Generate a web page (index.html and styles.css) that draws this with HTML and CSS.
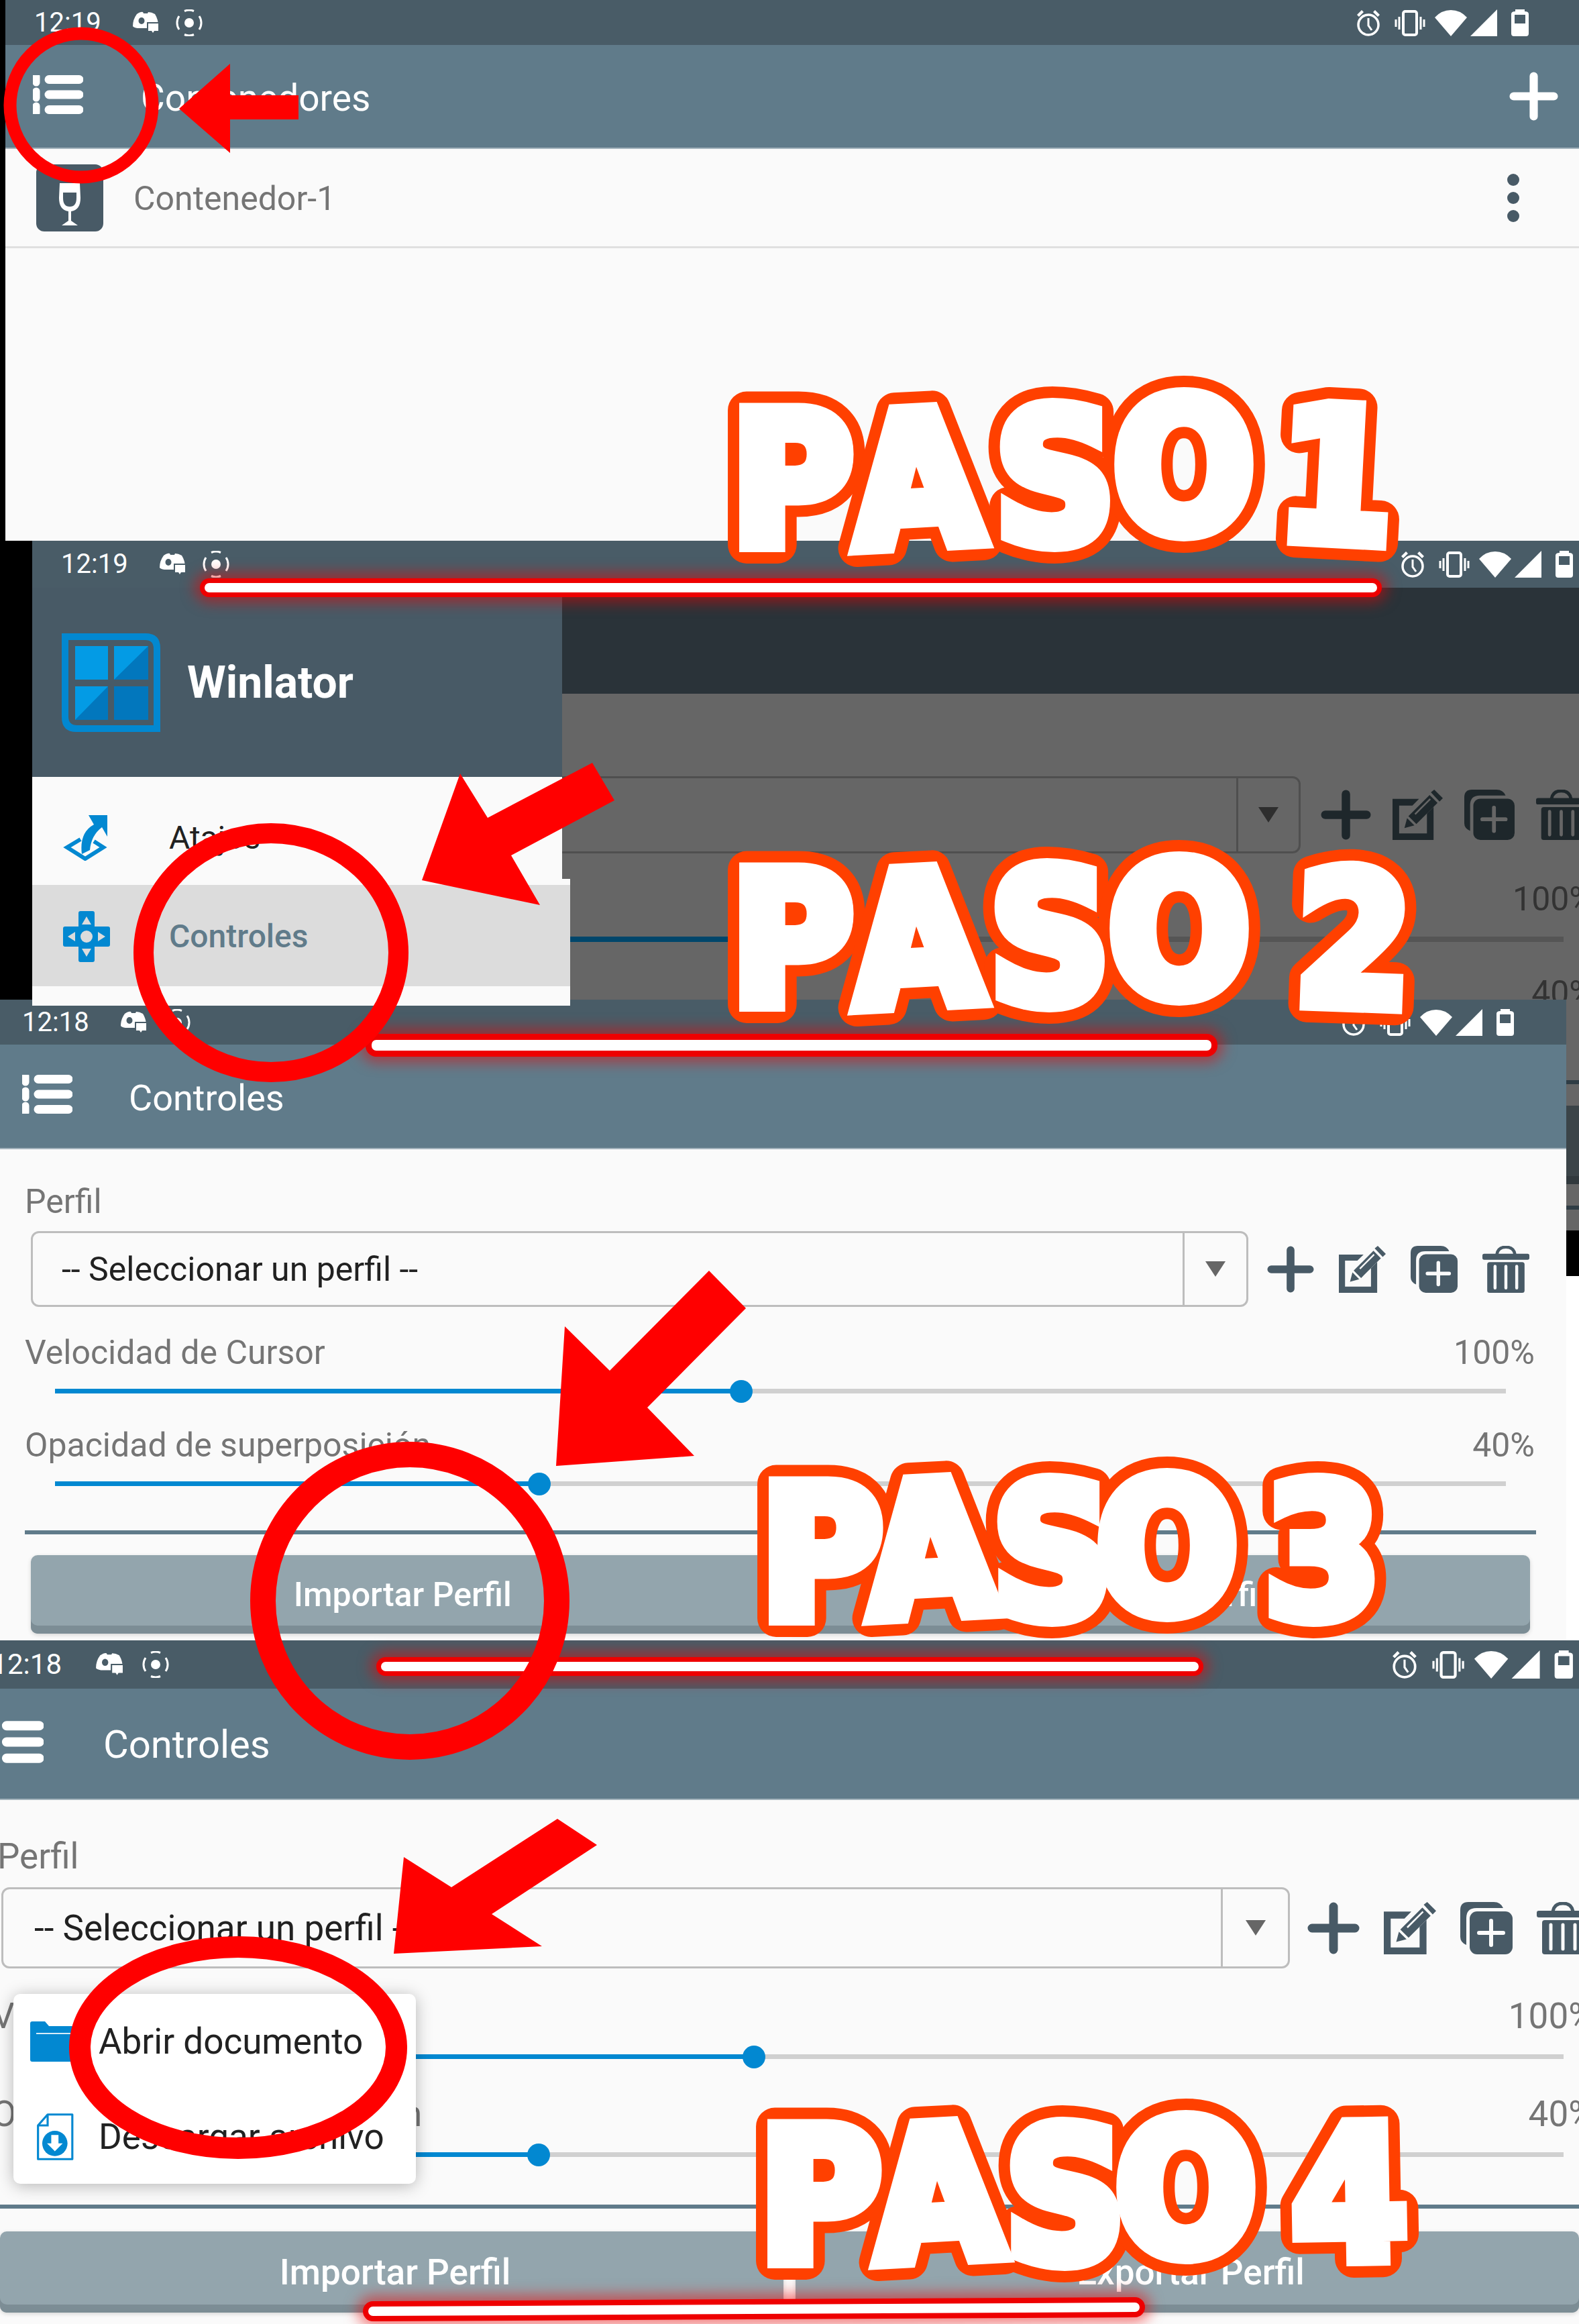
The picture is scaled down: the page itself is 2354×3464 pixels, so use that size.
FILE: index.html
```html
<!DOCTYPE html>
<html>
<head>
    <title>Winlator - Pasos</title>
    <meta name="viewport" content="width=device-width, initial-scale=1">
    <link rel="stylesheet" href="styles.css">
</head>
<body>
    <svg class="sprite" aria-hidden="true">
        <symbol id="i-discord" viewBox="0 0 40 36">
            <path d="M7 5Q13 1 16 2L17 4H23L24 2Q29 2 34 5Q39 13 39 23L31 26H8Q2 25 1 23Q1 13 7 5Z" fill="#fff"/>
            <ellipse cx="14" cy="15" rx="4.5" ry="5" fill="#495c67"/>
            <path d="M22 17H41V32H34L31 36L29 32H22Z" fill="#495c67"/>
            <path d="M24 19H39V30H33L31 33L29 30H24Z" fill="#fff"/>
        </symbol>
        <symbol id="i-target" viewBox="0 0 40 40">
            <circle cx="20" cy="20" r="7" fill="#fff"/>
            <path d="M5 30A18 18 0 0 1 5 10M35 10A18 18 0 0 1 35 30M13 2.500A18 18 0 0 1 27 2.500M13 37.500A18 18 0 0 0 27 37.500" fill="none" stroke="#fff" stroke-width="3"/>
        </symbol>
        <symbol id="i-system" viewBox="0 0 257 40">
            <circle cx="18" cy="23" r="15" fill="none" stroke="#fff" stroke-width="3.500"/>
            <path d="M18 13V24L23 31" fill="none" stroke="#fff" stroke-width="3"/>
            <path d="M1 8L8 1L11 4L4 11ZM35 8L28 1L25 4L32 11Z" fill="#fff"/>
            <rect x="70" y="3" width="20" height="35" rx="3" fill="none" stroke="#fff" stroke-width="4"/>
            <path d="M64 11V30M59 15V26M96 11V30M101 15V26" stroke="#fff" stroke-width="3"/>
            <path d="M117 12Q127 1 141 1Q155 1 165 12L141 40Z" fill="#fff"/>
            <path d="M170 40L210 0V40Z" fill="#fff"/>
            <path d="M237 3V0H251V3Q257 3 257 7V36Q257 40 253 40H235Q231 40 231 36V7Q231 3 237 3ZM236 8V21H252V8Z" fill="#fff" fill-rule="evenodd"/>
        </symbol>
        <symbol id="i-list" viewBox="0 0 75 58">
            <path d="M24 6.500H69M24 29H69M24 51.500H69" stroke="#fff" stroke-width="13" stroke-linecap="round"/>
            <path d="M5 2V11M5 24V34M5 46V56" stroke="#fff" stroke-width="11" stroke-linecap="round"/>
        </symbol>
        <symbol id="i-plus" viewBox="0 0 78 78">
            <path d="M39 7V71M7 39H71" fill="none" stroke="currentColor" stroke-width="13" stroke-linecap="round"/>
        </symbol>
        <symbol id="i-edit" viewBox="0 0 76 76">
            <path d="M0 14H40L30 24H10V66H52V36L62 26V76H0Z" fill="currentColor"/>
            <path d="M18 58L22 43L33 54Z" fill="currentColor"/>
            <path d="M24 40L56 8L68 20L36 52Z" fill="currentColor"/>
            <path d="M34 37L57 14" stroke="var(--cut)" stroke-width="2.500"/>
            <path d="M58 4L63 0L76 13L71 18Z" fill="currentColor"/>
        </symbol>
        <symbol id="i-copy" viewBox="0 0 78 78">
            <path d="M0 12Q0 0 12 0H50Q60 0 64 9H24Q9 9 9 24V64Q0 60 0 52Z" fill="currentColor"/>
            <rect x="14" y="14" width="64" height="64" rx="11" fill="currentColor"/>
            <path d="M46 28V64M28 46H64" stroke="var(--cut)" stroke-width="6" stroke-linecap="round"/>
        </symbol>
        <symbol id="i-trash" viewBox="0 0 78 78">
            <path d="M24 14Q26 2 39 2Q52 2 54 14" fill="none" stroke="currentColor" stroke-width="5"/>
            <rect x="0" y="13" width="78" height="10" rx="3" fill="currentColor"/>
            <rect x="8" y="27" width="62" height="51" rx="4" fill="currentColor"/>
            <path d="M21 34V70M39 34V70M57 34V70" stroke="var(--cut)" stroke-width="5" stroke-linecap="round"/>
        </symbol>
    </svg>

    <div class="page">

        <section class="shot shot-a">
            <div class="edge-strip"></div>
            <div class="screen">
                <div class="status">
                    <span class="clock">12:19</span>
                    <svg class="ico-discord"><use href="#i-discord"/></svg>
                    <svg class="ico-target"><use href="#i-target"/></svg>
                    <svg class="ico-system"><use href="#i-system"/></svg>
                </div>
                <header class="appbar">
                    <svg class="ico-list"><use href="#i-list"/></svg>
                    <span class="appbar-title">Contenedores</span>
                    <svg class="ico-add"><use href="#i-plus"/></svg>
                </header>
                <div class="container-row">
                    <svg class="wine" viewBox="0 0 100 100">
                        <rect width="100" height="100" rx="12" fill="#485a66"/>
                        <path d="M35 28H65L66 50Q66 68 52 70V84L62 91H38L48 84V70Q34 68 34 50Z" fill="#fff"/>
                        <path d="M40 42H60V50Q60 63 50 63Q40 63 40 50Z" fill="#485a66"/>
                    </svg>
                    <span class="container-name">Contenedor-1</span>
                    <svg class="kebab" viewBox="0 0 18 72">
                        <circle cx="9" cy="9" r="9"/>
                        <circle cx="9" cy="36" r="9"/>
                        <circle cx="9" cy="63" r="9"/>
                    </svg>
                </div>
            </div>
        </section>

        <section class="shot shot-b">
            <div class="edge-strip"></div>
            <div class="screen">
                <div class="status">
                    <span class="clock">12:19</span>
                    <svg class="ico-discord"><use href="#i-discord"/></svg>
                    <svg class="ico-target"><use href="#i-target"/></svg>
                    <svg class="ico-system"><use href="#i-system"/></svg>
                </div>
                <div class="dark-bar"></div>
                <div class="dimmed">
                    <div class="select-row">
                        <div class="select">
                            <span class="select-text"></span>
                            <span class="select-caret"><i></i></span>
                        </div>
                        <svg class="tool"><use href="#i-plus"/></svg>
                        <svg class="tool"><use href="#i-edit"/></svg>
                        <svg class="tool"><use href="#i-copy"/></svg>
                        <svg class="tool"><use href="#i-trash"/></svg>
                    </div>
                    <div class="value-row"><span></span><span>100%</span></div>
                    <div class="slider"><div class="slider-fill" style="width:47%"></div></div>
                    <div class="value-row"><span></span><span>40%</span></div>
                </div>

                <nav class="drawer">
                    <div class="drawer-head">
                        <svg class="logo" viewBox="0 0 147 147">
                            <path d="M0 0H125Q147 0 147 22V147H22Q0 147 0 125Z" fill="#0288d1"/>
                            <path d="M10 10H124Q137 10 137 23V137H23Q10 137 10 124Z" fill="#485a66"/>
                            <path d="M20 19H69V69H20ZM78 19H129V69H78ZM20 79H69V129H20Z" fill="#039be5"/>
                            <path d="M78 79H129V129H78ZM78 69L129 19V69ZM20 129L69 79V129Z" fill="#0277bd"/>
                        </svg>
                        <span class="drawer-title">Winlator</span>
                    </div>
                    <div class="drawer-item">
                        <svg class="drawer-ico" viewBox="0 0 70 70">
                            <path d="M26 38L6 50L33 67L60 50L46 41" fill="none" stroke="#0288d1" stroke-width="6"/>
                            <path d="M28 60Q24 28 46 16L38 2H66V34L58 20Q42 32 40 54Z" fill="#0288d1"/>
                        </svg>
                        <span class="drawer-label">Atajos</span>
                    </div>
                    <div class="drawer-lower">
                        <div class="drawer-item is-active">
                            <svg class="drawer-ico" viewBox="0 0 70 76">
                                <path d="M23 3Q23 0 26 0H44Q47 0 47 3V23H67Q70 23 70 26V50Q70 53 67 53H47V73Q47 76 44 76H26Q23 76 23 73V53H3Q0 53 0 50V26Q0 23 3 23H23Z" fill="#0288d1"/>
                                <circle cx="35" cy="38" r="9" fill="#dcdcdc"/>
                                <path d="M35 8L42 20H28ZM35 68L42 56H28ZM7 38L18 31V45ZM63 38L52 31V45Z" fill="#dcdcdc"/>
                            </svg>
                            <span class="drawer-label">Controles</span>
                        </div>
                    </div>
                </nav>
            </div>
        </section>

        <section class="shot shot-c">
            <div class="screen">
                <div class="status">
                    <span class="clock">12:18</span>
                    <svg class="ico-discord"><use href="#i-discord"/></svg>
                    <svg class="ico-target"><use href="#i-target"/></svg>
                    <svg class="ico-system"><use href="#i-system"/></svg>
                </div>
                <header class="appbar">
                    <svg class="ico-list"><use href="#i-list"/></svg>
                    <span class="appbar-title">Controles</span>
                </header>
                <div class="profile">
                    <div class="field-label">Perfil</div>
                    <div class="select-row">
                        <div class="select">
                            <span class="select-text">-- Seleccionar un perfil --</span>
                            <span class="select-caret"><i></i></span>
                        </div>
                        <svg class="tool"><use href="#i-plus"/></svg>
                        <svg class="tool"><use href="#i-edit"/></svg>
                        <svg class="tool"><use href="#i-copy"/></svg>
                        <svg class="tool"><use href="#i-trash"/></svg>
                    </div>
                    <div class="value-row"><span>Velocidad de Cursor</span><span>100%</span></div>
                    <div class="slider"><div class="slider-fill" style="width:47.3%"></div></div>
                    <div class="value-row"><span>Opacidad de superposición</span><span>40%</span></div>
                    <div class="slider"><div class="slider-fill" style="width:33.4%"></div></div>
                    <div class="rule"></div>
                    <div class="button-row">
                        <div class="button">Importar Perfil</div>
                        <div class="button">Exportar Perfil</div>
                    </div>
                </div>
            </div>
            <div class="side-strip">
                <div class="dim-a"></div>
                <div class="dim-line"></div>
                <div class="dim-b"></div>
                <div class="dim-button"></div>
                <div class="dim-button-edge"></div>
                <div class="dim-b"></div>
                <div class="dim-line"></div>
                <div class="dim-c"></div>
                <div class="dim-black"></div>
            </div>
        </section>

        <section class="shot shot-d">
            <div class="screen">
                <div class="status">
                    <span class="clock">12:18</span>
                    <svg class="ico-discord"><use href="#i-discord"/></svg>
                    <svg class="ico-target"><use href="#i-target"/></svg>
                    <svg class="ico-system"><use href="#i-system"/></svg>
                </div>
                <header class="appbar">
                    <svg class="ico-list"><use href="#i-list"/></svg>
                    <span class="appbar-title">Controles</span>
                </header>
                <div class="profile">
                    <div class="field-label">Perfil</div>
                    <div class="select-row">
                        <div class="select">
                            <span class="select-text">-- Seleccionar un perfil --</span>
                            <span class="select-caret"><i></i></span>
                        </div>
                        <svg class="tool"><use href="#i-plus"/></svg>
                        <svg class="tool"><use href="#i-edit"/></svg>
                        <svg class="tool"><use href="#i-copy"/></svg>
                        <svg class="tool"><use href="#i-trash"/></svg>
                    </div>
                    <div class="value-row"><span>Velocidad de Cursor</span><span>100%</span></div>
                    <div class="slider"><div class="slider-fill" style="width:47.3%"></div></div>
                    <div class="value-row"><span>Opacidad de superposición</span><span>40%</span></div>
                    <div class="slider"><div class="slider-fill" style="width:33.3%"></div></div>
                    <div class="rule"></div>
                    <div class="button-row">
                        <div class="button">Importar Perfil</div>
                        <div class="button">Exportar Perfil</div>
                    </div>
                </div>
                <div class="file-menu">
                    <div class="file-item">
                        <svg class="file-ico" viewBox="0 0 70 60">
                            <path d="M0 3Q0 0 3 0H22L28 7H66Q70 7 70 11V60H3Q0 60 0 57Z" fill="#0288d1"/>
                            <path d="M9 18H70" stroke="#d6ecf8" stroke-width="2"/>
                        </svg>
                        <span>Abrir documento</span>
                    </div>
                    <div class="file-item">
                        <svg class="file-ico" viewBox="0 0 70 78">
                            <path d="M25 2H66V76H9V20Z" fill="#fff" stroke="#0288d1" stroke-width="3.500" stroke-linejoin="round"/>
                            <path d="M25 2V20H9" fill="none" stroke="#0288d1" stroke-width="3.500"/>
                            <circle cx="37" cy="50" r="21" fill="#0288d1"/>
                            <path d="M31 36H43V50H50L37 63L24 50H31Z" fill="#fff"/>
                        </svg>
                        <span>Descargar archivo</span>
                    </div>
                </div>
            </div>
        </section>

        <div class="glow-bar bar-1"></div>
        <div class="glow-bar bar-2"></div>
        <div class="glow-bar bar-3"></div>
        <div class="glow-bar bar-4"></div>

        <!-- hand drawn marks on top of the screenshots -->
        <svg class="marks" viewBox="0 0 2354 3464">
            <defs>
                <g id="paso-1">
                    <text x="1181" y="812">P</text>
                    <text x="1372" y="812" transform="rotate(-3 1372 812)">A</text>
                    <text x="1573" y="808">S</text>
                    <text x="1765" y="792">O</text>
                    <text x="1987" y="806" transform="rotate(3 1987 806)">1</text>
                </g>
                <g id="paso-2">
                    <text x="1181" y="1497">P</text>
                    <text x="1372" y="1497" transform="rotate(-3 1372 1497)">A</text>
                    <text x="1565" y="1494">S</text>
                    <text x="1758" y="1484">O</text>
                    <text x="2015" y="1498" transform="rotate(2 2015 1498)">2</text>
                </g>
                <g id="paso-3">
                    <text x="1225" y="2412">P</text>
                    <text x="1393" y="2407" transform="rotate(-3 1393 2407)">A</text>
                    <text x="1569" y="2410">S</text>
                    <text x="1740" y="2403">O</text>
                    <text x="1972" y="2410">3</text>
                </g>
                <g id="paso-4">
                    <text x="1223" y="3370">P</text>
                    <text x="1403" y="3367" transform="rotate(-3 1403 3367)">A</text>
                    <text x="1588" y="3370">S</text>
                    <text x="1768" y="3360">O</text>
                    <text x="2013" y="3367" transform="rotate(-1 2013 3367)">4</text>
                </g>
            </defs>

            <ellipse class="ring" cx="121" cy="157" rx="106" ry="107" stroke-width="19"/>
            <polygon class="arrow" points="267,162 343,95 343,142 445,142 445,178 343,178 343,228"/>

            <ellipse class="ring" cx="404" cy="1420" rx="190" ry="178" stroke-width="30"/>
            <polygon class="arrow" points="629,1312 686,1153 727,1219 883,1137 916,1193 762,1275 805,1349"/>

            <ellipse class="ring" cx="611" cy="2386" rx="219" ry="218" stroke-width="38"/>
            <polygon class="arrow" points="829,2185 842,1977 909,2043 1057,1894 1112,1950 965,2098 1035,2170"/>

            <ellipse class="ring" cx="355" cy="3052" rx="236" ry="150" stroke-width="32"/>
            <polygon class="arrow" points="587,2912 602,2768 673,2813 831,2711 890,2750 733,2853 808,2901"/>

            <use class="title-edge" href="#paso-1"/>
            <use class="title-face" href="#paso-1"/>
            <use class="title-edge" href="#paso-2"/>
            <use class="title-face" href="#paso-2"/>
            <use class="title-edge" href="#paso-3"/>
            <use class="title-face" href="#paso-3"/>
            <use class="title-edge" href="#paso-4"/>
            <use class="title-face" href="#paso-4"/>
        </svg>
    </div>
</body>
</html>
```

FILE: styles.css
```css
* {
    box-sizing: border-box;
}

body {
    margin: 0;
    background-color: #fff;
    font-family: Roboto, "Liberation Sans", sans-serif;
}

.sprite {
    position: absolute;
    width: 0;
    height: 0;
}

.page {
    position: relative;
    width: 2354px;
    height: 3464px;
    overflow: hidden;
}

.shot {
    display: flex;
    align-items: stretch;
}

.edge-strip {
    background-color: #000;
}

.screen {
    position: relative;
    flex: 1;
    min-width: 0;
    display: flex;
    flex-direction: column;
    background-color: #fafafa;
    --cut: #fafafa;
}

/* status bar */
.status {
    display: flex;
    align-items: center;
    flex: none;
    background-color: #495c67;
    color: #fff;
}

.clock {
    width: 99px;
    font-size: 40px;
    line-height: 40px;
}

.ico-discord {
    width: 40px;
    height: 36px;
    margin-left: 47px;
}

.ico-target {
    width: 40px;
    height: 40px;
    margin-left: 25px;
}

.ico-system {
    width: 257px;
    height: 40px;
    margin-left: auto;
}

/* app bar */
.appbar {
    display: flex;
    align-items: center;
    flex: none;
    background-color: #607b8a;
    border-bottom: 2px solid #a3b3bc;
    color: #fff;
}

.ico-list {
    width: 75px;
    height: 58px;
    flex: none;
}

.appbar-title {
    font-size: 56px;
}

.ico-add {
    width: 73px;
    height: 73px;
    margin-left: auto;
    margin-right: 31px;
    color: #fff;
}

/* step 1 */
.shot-a {
    height: 806px;
}

.shot-a .edge-strip {
    width: 8px;
}

.shot-a .status {
    height: 67px;
    padding: 0 75px 0 43px;
}

.shot-a .appbar {
    height: 155px;
    padding-left: 41px;
}

.shot-a .ico-list {
    margin-top: -6px;
}

.shot-a .appbar-title {
    margin: 4px 0 0 86px;
    font-size: 55px;
}

.container-row {
    display: flex;
    align-items: center;
    height: 148px;
    padding: 0 89px 0 46px;
    border-bottom: 3px solid #e0e0e0;
}

.wine {
    width: 100px;
    height: 100px;
}

.container-name {
    margin: 3px 0 0 45px;
    font-size: 50px;
    color: #757575;
}

.kebab {
    width: 18px;
    height: 72px;
    margin-left: auto;
    fill: #485a66;
}

/* step 2 */
.shot-b {
    position: relative;
    z-index: 2;
    height: 684px;
}

.shot-b .edge-strip {
    width: 48px;
}

.shot-b .screen {
    background-color: #666;
    --cut: #666;
}

.shot-b .status {
    height: 70px;
    padding: 0 9px 0 43px;
}

.dark-bar {
    height: 158px;
    flex: none;
    background-color: #2a3339;
}

.dimmed {
    flex: 1;
    min-height: 0;
    overflow: hidden;
    padding-top: 123px;
    font-size: 50px;
    color: #333;
}

.dimmed .select {
    width: 1891px;
    height: 115px;
    border-color: #4f4f4f;
}

.dimmed .select-caret {
    width: 93px;
    border-color: #4f4f4f;
}

.dimmed .select-caret i {
    border-top-color: #2e2e2e;
}

.dimmed .select-row {
    gap: 32px;
}

.dimmed .select-row .tool:first-of-type {
    margin-left: -2px;
}

.dimmed .tool {
    width: 75px;
    height: 75px;
    color: #1e272b;
}

.dimmed .value-row {
    height: 60px;
    margin: 38px -22px 0 0;
    line-height: 60px;
    color: #333;
}

.dimmed .slider {
    height: 8px;
    margin: 26px 23px 0 0;
    background-color: #555;
}

.dimmed .slider + .value-row {
    margin-top: 46px;
}

.dimmed .slider-fill {
    background-color: #00466b;
}

.drawer {
    position: absolute;
    left: 0;
    top: 70px;
    width: 790px;
    height: 623px;
}

.drawer-head {
    display: flex;
    align-items: center;
    height: 282px;
    padding-left: 44px;
    background-color: #485a66;
}

.logo {
    width: 147px;
    height: 147px;
}

.drawer-title {
    margin-left: 40px;
    font-size: 66px;
    font-weight: 700;
    color: #fff;
}

.drawer-item {
    display: flex;
    align-items: center;
    height: 152px;
    padding: 28px 0 0 46px;
    background-color: #fafafa;
}

.drawer-ico {
    width: 70px;
    height: 70px;
    flex: none;
}

.drawer-label {
    margin-left: 88px;
    font-size: 48px;
    color: #212121;
}

.drawer-lower {
    width: 802px;
    height: 189px;
    padding-top: 9px;
    background-color: #fafafa;
}

.drawer-item.is-active {
    height: 151px;
    padding-top: 2px;
    background-color: #dcdcdc;
}

.is-active .drawer-ico {
    height: 76px;
}

.is-active .drawer-label {
    font-weight: 500;
    color: #607b8a;
}

/* profile form */
.field-label {
    height: 56px;
    font-size: 50px;
    line-height: 56px;
    color: #757575;
}

.select-row {
    display: flex;
    align-items: center;
    gap: 36px;
}

.select {
    display: flex;
    flex: none;
    justify-content: space-between;
    border: 3px solid #bdbdbd;
    border-radius: 12px;
}

.select-text {
    align-self: center;
    color: #212121;
}

.select-caret {
    display: flex;
    align-items: center;
    justify-content: center;
    border-left: 3px solid #bdbdbd;
}

.select-caret i {
    width: 0;
    height: 0;
    border-left: 15px solid transparent;
    border-right: 15px solid transparent;
    border-top: 23px solid #666;
}

.tool {
    flex: none;
    color: #485a66;
}

.value-row {
    display: flex;
    justify-content: space-between;
    color: #757575;
}

.slider {
    position: relative;
    height: 7px;
    background-color: #d0d0d0;
}

.slider-fill {
    position: relative;
    height: 100%;
    background-color: #0288d1;
}

.slider-fill::after {
    content: "";
    position: absolute;
    right: -17px;
    top: 50%;
    width: 34px;
    height: 34px;
    margin-top: -17px;
    border-radius: 50%;
    background-color: #0288d1;
}

.dimmed .slider-fill::after {
    display: none;
}

.rule {
    height: 6px;
    background-color: #607b8a;
}

.button-row {
    display: flex;
    gap: 18px;
}

.button {
    display: flex;
    flex: 1;
    align-items: center;
    justify-content: center;
    background-color: #93a5ad;
    border-radius: 10px;
    box-shadow: inset 0 -12px 0 #7c8d95, 0 2px 6px rgba(0, 0, 0, 0.15);
    font-weight: 500;
    color: #fff;
}

/* step 3 */
.shot-c {
    height: 955px;
}

.shot-c .screen {
    flex: none;
    width: 2335px;
}

.shot-c .status {
    height: 67px;
    padding: 0 78px 0 33px;
}

.shot-c .appbar {
    height: 156px;
    padding-left: 33px;
}

.shot-c .ico-list {
    margin-top: -6px;
}

.shot-c .appbar-title {
    margin: 4px 0 0 84px;
    font-size: 54px;
}

.shot-c .profile {
    padding: 50px 47px 0 37px;
    font-size: 50px;
}

.shot-c .select-row {
    margin: 16px 0 0 9px;
    gap: 37px;
}

.shot-c .select {
    width: 1815px;
    height: 113px;
    margin-right: -9px;
}

.shot-c .select-text {
    padding-left: 43px;
}

.shot-c .select-caret {
    width: 95px;
}

.shot-c .tool {
    width: 70px;
    height: 70px;
}

.shot-c .value-row {
    height: 56px;
    margin-top: 40px;
    line-height: 56px;
}

.shot-c .slider {
    margin: 26px 43px 0 45px;
}

.shot-c .slider + .value-row {
    margin-top: 49px;
}

.shot-c .rule {
    margin: 66px -2px 0 0;
}

.shot-c .button-row {
    height: 117px;
    margin: 31px 7px 0 9px;
}

.shot-c .button {
    font-size: 50px;
}

.side-strip {
    flex: 1;
    display: flex;
    flex-direction: column;
}

.dim-a {
    height: 120px;
    background-color: #666;
}

.dim-b {
    height: 32px;
    background-color: #666;
}

.dim-c {
    height: 31px;
    background-color: #666;
}

.dim-line {
    height: 6px;
    background-color: #2f3d45;
}

.dim-button {
    height: 105px;
    background-color: #3b4448;
}

.dim-button-edge {
    height: 12px;
    background-color: #31393d;
}

.dim-black {
    height: 68px;
    background-color: #000;
}

/* step 4 */
.shot-d {
    height: 1019px;
}

.shot-d .status {
    height: 72px;
    padding: 0 9px 0 0;
}

.shot-d .clock {
    width: 92px;
    overflow: hidden;
    direction: rtl;
    font-size: 42px;
}

.shot-d .ico-discord {
    width: 42px;
    height: 38px;
    margin-left: 50px;
}

.shot-d .ico-target {
    margin-left: 28px;
}

.shot-d .ico-system {
    width: 270px;
    height: 42px;
}

.shot-d .appbar {
    height: 166px;
    padding-left: 0;
}

.shot-d .ico-list {
    width: 81px;
    height: 63px;
    margin: -6px 0 0 -16px;
}

.shot-d .appbar-title {
    margin: 2px 0 0 89px;
    font-size: 58px;
}

.shot-d .profile {
    padding-top: 54px;
    font-size: 53px;
}

.shot-d .field-label {
    height: 60px;
    margin-left: -4px;
    font-size: 53px;
    line-height: 60px;
}

.shot-d .select-row {
    margin: 16px 0 0 2px;
    gap: 36px;
}

.shot-d .select {
    width: 1921px;
    height: 121px;
    margin-right: -10px;
}

.shot-d .select-text {
    padding-left: 46px;
}

.shot-d .select-caret {
    width: 100px;
}

.shot-d .tool {
    width: 78px;
    height: 78px;
}

.shot-d .value-row {
    height: 60px;
    margin: 41px -23px 0 -12px;
    line-height: 60px;
}

.shot-d .slider {
    margin: 27px 23px 0 40px;
}

.shot-d .slider + .value-row {
    margin-top: 52px;
}

.shot-d .rule {
    margin-top: 71px;
}

.shot-d .button-row {
    height: 121px;
    margin-top: 34px;
}

.shot-d .button {
    padding-left: 10px;
    font-size: 53px;
}

.file-menu {
    position: absolute;
    left: 20px;
    top: 527px;
    width: 600px;
    height: 283px;
    border-radius: 10px;
    background-color: #fff;
    box-shadow: 0 3px 24px rgba(0, 0, 0, 0.28);
}

.file-item {
    display: flex;
    align-items: center;
    height: 142px;
    padding-left: 25px;
    font-size: 53px;
    color: #212121;
}

.file-ico {
    width: 70px;
    height: 70px;
    margin-right: 32px;
    flex: none;
}

/* neon bars */
.glow-bar {
    position: absolute;
    z-index: 3;
    border: 7px solid #ee0000;
    border-radius: 16px;
    background-color: #fff;
    box-shadow: 0 0 20px 8px rgba(238, 0, 0, 0.5);
}

.bar-1 {
    left: 298px;
    top: 862px;
    width: 1762px;
    height: 28px;
}

.bar-2 {
    left: 545px;
    top: 1541px;
    width: 1270px;
    height: 34px;
    border-width: 9px;
}

.bar-3 {
    left: 561px;
    top: 2470px;
    width: 1233px;
    height: 28px;
}

.bar-4 {
    left: 541px;
    top: 3427px;
    width: 1166px;
    height: 30px;
    border-width: 8px;
    transform: rotate(-0.3deg);
}

/* marks */
.marks {
    position: absolute;
    left: 0;
    top: 0;
    z-index: 3;
    width: 2354px;
    height: 3464px;
}

.ring {
    fill: none;
    stroke: #ff0000;
}

.arrow {
    fill: #ff0000;
}

.marks text {
    font-family: "DejaVu Sans", sans-serif;
    font-size: 275px;
    font-weight: 700;
    font-stretch: condensed;
    text-anchor: middle;
}

.title-edge {
    fill: #ff4000;
    stroke: #ff4000;
    stroke-width: 56px;
    stroke-linejoin: round;
}

.title-face {
    fill: #fff;
    stroke: #fff;
    stroke-width: 22px;
    stroke-linejoin: miter;
}
```
